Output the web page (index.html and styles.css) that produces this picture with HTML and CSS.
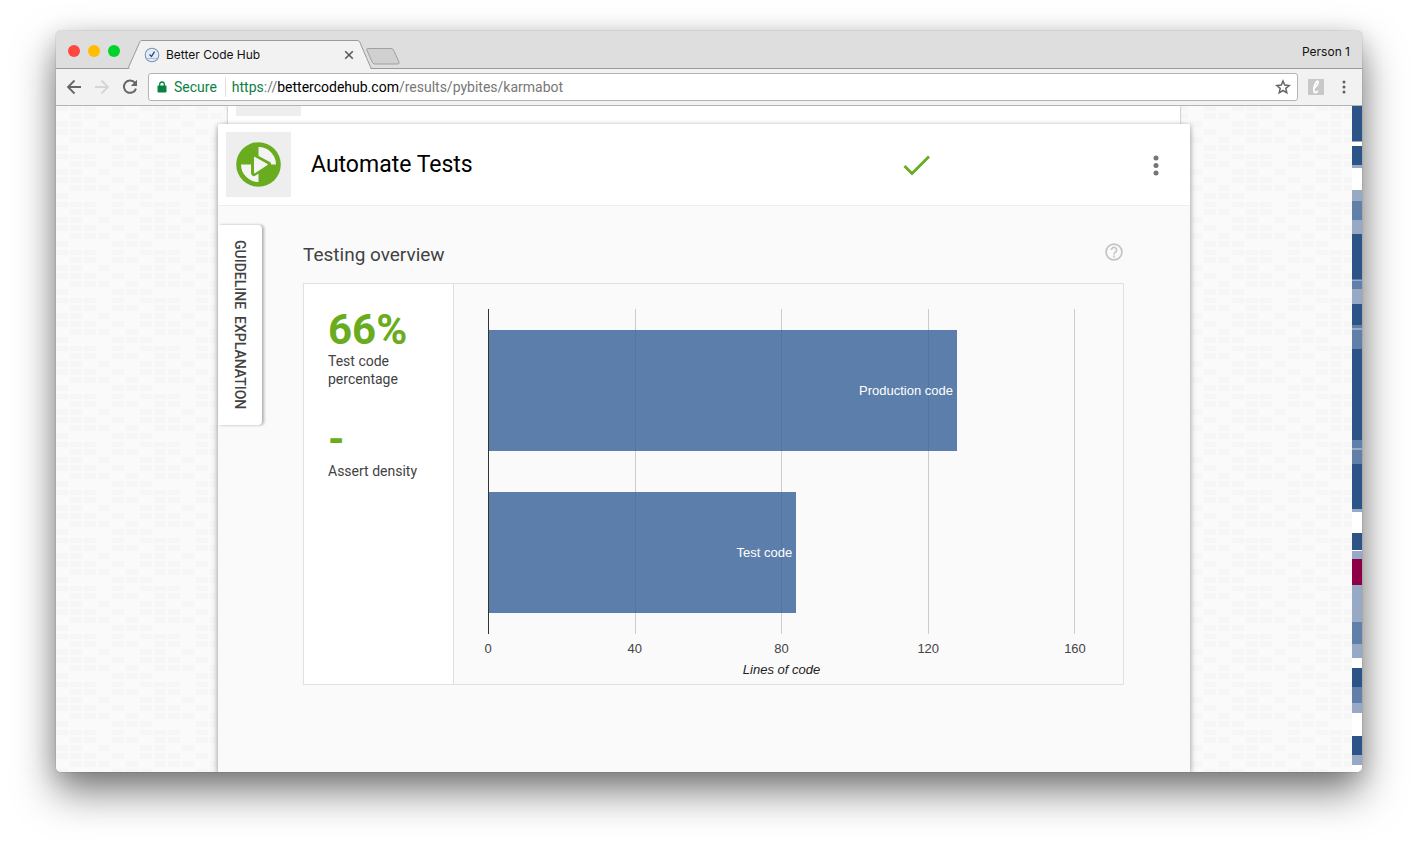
FILE: index.html
```html
<!DOCTYPE html>
<html lang="en">
<head>
<meta charset="utf-8">
<title>Better Code Hub</title>
<link rel="stylesheet" href="styles.css">
</head>
<body>
<div class="window">
  <header class="tabstrip">
    <div class="lights">
      <button class="light red" aria-label="Close window"></button>
      <button class="light yellow" aria-label="Minimize window"></button>
      <button class="light green" aria-label="Zoom window"></button>
    </div>
    <div class="tab">
      <svg class="tab-shape" width="244" height="29" viewBox="0 0 244 29" aria-hidden="true"><path d="M0 28.5 L12 1.5 Q12.500 .5 14 .5 H229 Q231 .5 231.500 1.500 L242.500 27 Q243 28.500 244 28.500" fill="#f2f2f2" stroke="#9a9a9a"/><path d="M2 28.500H242" stroke="#f2f2f2"/></svg>
      <div class="tab-content">
        <svg width="16" height="16" viewBox="0 0 16 16" aria-hidden="true"><circle cx="8" cy="8" r="6.800" fill="#e4ebf5" stroke="#7d95ba" stroke-width="1.100"/><path d="M2.500 11.500h11" stroke="#a9bbd6"/><path d="M5.500 7.500l2 2 3-4.800" fill="none" stroke="#24497e" stroke-width="1.300"/></svg>
        <span class="tab-title">Better Code Hub</span>
        <button class="icon-button" aria-label="Close tab"><svg width="10" height="10" viewBox="0 0 10 10"><path d="M1.200 1.200l7.600 7.600M8.800 1.200l-7.600 7.600" stroke="#5a5a5a" stroke-width="1.600"/></svg></button>
      </div>
    </div>
    <button class="icon-button new-tab" aria-label="New tab"><svg width="34" height="17" viewBox="0 0 34 17"><path d="M1.500 .5H25Q27 .5 27.800 2.500L33 14Q33.500 16 32 16H9Q7 16 6.200 14L.8 2Q.5 .5 1.500 .5Z" fill="#d0d0d0" stroke="#a0a0a0"/></svg></button>
    <span class="person">Person 1</span>
  </header>

  <nav class="toolbar" aria-label="Browser">
    <button class="icon-button" aria-label="Back"><svg width="16" height="16" viewBox="0 0 16 16"><path d="M15 8H2.200M8.500 1.500L2 8l6.500 6.500" fill="none" stroke="#666" stroke-width="1.800"/></svg></button>
    <button class="icon-button" aria-label="Forward"><svg width="16" height="16" viewBox="0 0 16 16"><path d="M1 8h12.800M7.500 1.500L14 8l-6.500 6.500" fill="none" stroke="#d5d5d5" stroke-width="1.800"/></svg></button>
    <button class="icon-button" aria-label="Reload"><svg width="16" height="16" viewBox="0 0 16 16"><path d="M13 3.800A6.200 6.200 0 1 0 14 9.600" fill="none" stroke="#666" stroke-width="2"/><path d="M15 .8V7H8.800Z" fill="#666"/></svg></button>
    <div class="omnibox">
      <svg class="lock" width="10" height="12" viewBox="0 0 10 12" aria-hidden="true"><rect x=".5" y="4.500" width="9" height="7" rx="1" fill="#0b8043"/><path d="M2.700 5V3.300a2.300 2.300 0 0 1 4.600 0V5" fill="none" stroke="#0b8043" stroke-width="1.300"/></svg>
      <span class="secure">Secure</span>
      <a class="url" href="https://bettercodehub.com/results/pybites/karmabot"><span class="scheme">https</span>://<span class="host">bettercodehub.com</span>/results/pybites/karmabot</a>
      <button class="icon-button" aria-label="Bookmark this page"><svg width="16" height="16" viewBox="0 0 16 16"><path d="M8 2l1.700 4.100 4.500.4-3.400 2.900 1 4.400L8 11.500l-3.800 2.300 1-4.400L1.800 6.500l4.500-.4Z" fill="none" stroke="#666" stroke-width="1.500"/></svg></button>
    </div>
    <button class="icon-button extension" aria-label="Extension"><svg width="16" height="16" viewBox="0 0 16 16"><rect width="16" height="16" rx="1" fill="#c8c8c8"/><path d="M5 9.500C8 8.500 11 4.500 10 2.500C9 .8 6.500 5 6 9C5.500 13.500 6.500 15 10 12" fill="none" stroke="#fff" stroke-width="1.700"/></svg></button>
    <button class="icon-button kebab" aria-label="Browser menu"><svg width="4" height="14" viewBox="0 0 4 14" fill="#5f5f5f"><circle cx="2" cy="2" r="1.500"/><circle cx="2" cy="7" r="1.500"/><circle cx="2" cy="12" r="1.500"/></svg></button>
  </nav>

  <div class="page">
    <main class="content">
      <svg class="bricks" width="100%" height="100%" aria-hidden="true">
        <defs><pattern id="brick" width="84" height="48" patternUnits="userSpaceOnUse">
          <path fill="#f6f6f6" d="M0 0h12v5H0zM14 0h12v5H14zM28 0h12v5H28zM56 0h12v5H56zM14 7h12v6H14zM28 7h12v6H28zM56 7h12v6H56zM70 7h12v6H70zM0 15h12v6H0zM14 15h12v6H14zM42 15h12v6H42zM0 23h12v6H0zM14 23h12v6H14zM28 23h12v6H28zM56 23h12v6H56zM14 31h12v6H14zM28 31h12v6H28zM42 31h12v6H42zM70 31h12v6H70zM0 39h12v6H0zM56 39h12v6H56zM70 39h12v6H70z"/>
        </pattern></defs>
        <rect width="100%" height="100%" fill="url(#brick)"/>
      </svg>
      <section class="previous-card"><div class="previous-icon"></div></section>
      <article class="card">
        <header class="card-header">
          <div class="card-icon">
            <svg width="46" height="46" viewBox="0 0 46 46" aria-hidden="true"><circle cx="22.500" cy="22.500" r="22.300" fill="#69ac20"/><path d="M22.500 5A17.500 17.500 0 0 1 40 22.500H22.500Z" fill="#f4f4f4"/><path d="M5 22.500A17.500 17.500 0 0 0 22.500 40V22.500Z" fill="#f4f4f4"/><path d="M18 15L32 22.500L18 31Z" fill="#69ac20" stroke="#69ac20" stroke-width="6" stroke-linejoin="round"/><path d="M18.500 15.200L31.500 22.500L18.500 31Z" fill="#f4f4f4" stroke="#f4f4f4" stroke-linejoin="round"/></svg>
          </div>
          <h1 class="card-title">Automate Tests</h1>
          <svg class="check" width="28" height="22" viewBox="0 0 28 22" role="img" aria-label="Passed"><path d="M1.500 12L9 19.500 26 2.500" fill="none" stroke="#69ac20" stroke-width="2.800"/></svg>
          <button class="icon-button card-menu" aria-label="More"><svg width="6" height="22" viewBox="0 0 6 22" fill="#757575"><circle cx="3" cy="4" r="2.500"/><circle cx="3" cy="11.500" r="2.500"/><circle cx="3" cy="19" r="2.500"/></svg></button>
        </header>
        <div class="card-body">
          <button class="guideline">GUIDELINE&nbsp; EXPLANATION</button>
          <section class="overview">
            <div class="overview-heading">
              <h2 class="overview-title">Testing overview</h2>
              <button class="icon-button" aria-label="Help"><svg width="18" height="18" viewBox="0 0 18 18"><circle cx="9" cy="9" r="7.900" fill="none" stroke="#c4c4c4" stroke-width="1.700"/><path d="M6.400 7a2.600 2.600 0 1 1 4.500 1.800C9.700 9.800 9 10.100 9 11.500M9 12.600v1.800" fill="none" stroke="#c4c4c4" stroke-width="1.600"/></svg></button>
            </div>
            <div class="panel">
              <div class="metrics">
                <div class="metric"><strong class="value">66%</strong><span class="label">Test code percentage</span></div>
                <div class="metric"><strong class="value">-</strong><span class="label">Assert density</span></div>
              </div>
              <figure class="chart">
                <div class="plot">
                  <div class="gridlines"><i></i><i></i><i></i><i></i></div>
                  <div class="bars">
                    <div class="bar" style="width:80%">Production code</div>
                    <div class="bar" style="width:52.5%">Test code</div>
                  </div>
                </div>
                <div class="ticks"><span>0</span><span>40</span><span>80</span><span>120</span><span>160</span></div>
                <figcaption class="axis-title">Lines of code</figcaption>
              </figure>
            </div>
          </section>
        </div>
      </article>
    </main>
    <aside class="minimap" aria-hidden="true"></aside>
  </div>
</div>
<script src="minimap.js"></script>
</body>
</html>
```

FILE: minimap.js
```js
const segments = [
  ['dark', 35], ['pale', 1], ['blank', 4], ['dark', 19], ['pale', 3], ['blank', 22],
  ['pale', 11], ['mid', 19], ['pale', 14], ['dark', 45], ['mid', 1], ['pale', 1],
  ['mid', 8], ['pale', 15], ['dark', 21], ['mid', 3], ['pale', 2], ['mid', 19],
  ['dark', 91], ['mid', 8], ['pale', 2], ['mid', 14], ['dark', 45], ['pale', 3],
  ['blank', 21], ['dark', 17], ['blank', 1], ['pale', 8], ['alert', 26], ['pale', 37],
  ['mid', 22], ['pale', 14], ['blank', 10], ['dark', 19], ['mid', 16], ['pale', 10],
  ['blank', 23], ['dark', 19], ['pale', 10], ['blank', 7]
];
const minimap = document.querySelector('.minimap');
for (const [tone, size] of segments) {
  const segment = document.createElement('span');
  segment.className = tone;
  segment.style.flexGrow = size;
  minimap.append(segment);
}
```

FILE: styles.css
```css
* { box-sizing: border-box; }
body {
  margin: 0;
  min-height: 100vh;
  display: flex;
  padding: 31px 56px 80px;
  background: #fff;
  font-family: Roboto, "Liberation Sans", sans-serif;
  color: #424242;
}
h1, h2, figure { margin: 0; font-weight: 400; }
button { font: inherit; color: inherit; }
.icon-button { display: flex; padding: 0; border: 0; background: none; }

.window {
  flex: 1;
  display: flex;
  flex-direction: column;
  border-radius: 5px;
  overflow: hidden;
  box-shadow: 0 0 1px rgba(0,0,0,.6), 0 20px 40px rgba(0,0,0,.5), 0 4px 22px rgba(0,0,0,.14);
}
.tabstrip {
  display: flex;
  align-items: flex-end;
  height: 38px;
  padding: 0 12px;
  background: #dedede;
  box-shadow: inset 0 -1px #9a9a9a;
}
.lights { display: flex; gap: 8px; margin: 0 8px 12px 0; }
.light { width: 12px; height: 12px; padding: 0; border: 0; border-radius: 50%; }
.red { background: #ff4742; }
.yellow { background: #ffbd00; }
.green { background: #00d42c; }
.tab { display: grid; width: 244px; }
.tab-shape, .tab-content { grid-area: 1 / 1; }
.tab-content { display: flex; align-items: center; padding: 0 18px 0 16px; }
.tab-title { flex: 1; padding-left: 6px; font: 12px Inter, sans-serif; color: #111; }
.new-tab { margin: 0 0 4px -6px; }
.person { margin: 0 0 9px auto; font: 12px/16px Inter, sans-serif; color: #111; }

.toolbar {
  display: flex;
  align-items: center;
  gap: 12px;
  height: 37px;
  padding: 0 16px 0 10px;
  background: #f2f2f2;
  border-bottom: 1px solid #b4b4b4;
}
.omnibox {
  flex: 1;
  display: flex;
  align-items: center;
  height: 28px;
  margin-left: -2px;
  padding: 0 6px 0 8px;
  background: #fff;
  border: 1px solid #b4b4b4;
  border-radius: 3px;
  font-size: 14px;
}
.secure { margin: 0 6px 0 7px; padding-right: 8px; border-right: 1px solid #e0e0e0; line-height: 20px; color: #0b8043; }
.url { flex: 1; color: #777; text-decoration: none; }
.scheme { color: #0b8043; }
.host { color: #000; }
.extension { margin-left: -2px; }
.kebab { margin-left: 6px; }

.page { flex: 1; display: flex; background: #fafafa; }
.content {
  flex: 1;
  position: relative;
  display: flex;
  flex-direction: column;
  align-items: center;
  overflow: hidden;
}
.bricks { position: absolute; inset: 0; }
.previous-card {
  position: relative;
  width: 952px;
  max-width: 74%;
  height: 18px;
  padding-left: 8px;
  background: #fff;
  box-shadow: 0 0 2px rgba(0,0,0,.4);
}
.previous-icon { width: 65px; height: 10px; background: #eee; }
.card {
  position: relative;
  flex: 1;
  width: 75%;
  background: #fafafa;
  border-radius: 2px 2px 0 0;
  box-shadow: 0 1px 5px rgba(0,0,0,.35), 0 4px 10px rgba(0,0,0,.12);
}
.card-header {
  display: flex;
  align-items: center;
  padding: 8px 31px 8px 8px;
  background: #fff;
  border-bottom: 1px solid #eee;
  border-radius: 2px 2px 0 0;
}
.card-icon { display: grid; place-items: center; width: 65px; height: 65px; background: #eee; }
.card-title { flex: 1; padding-left: 20px; font-size: 23px; line-height: 32px; color: #000; }
.check { margin-right: 222px; }
.card-body { display: flex; align-items: flex-start; padding: 19px 66px 86px 0; }
.guideline {
  width: 44px;
  height: 200px;
  padding: 0;
  border: 0;
  border-radius: 0 4px 4px 0;
  background: #fff;
  box-shadow: 2px 0 3px rgba(0,0,0,.3);
  writing-mode: vertical-rl;
  font-weight: 500;
  font-size: 14px;
}
.overview { flex: 1; padding: 14px 0 0 41px; }
.overview-heading { display: flex; align-items: center; justify-content: space-between; height: 26px; margin-bottom: 18px; padding-right: 1px; }
.overview-title { font-size: 19px; padding-top: 4px; }
.panel { display: flex; height: 402px; border: 1px solid #e0e0e0; }
.metrics { width: 150px; padding: 24px; background: #fff; border-right: 1px solid #e0e0e0; }
.metric { display: flex; flex-direction: column; margin-bottom: 30px; }
.value { font-size: 42px; line-height: 44px; color: #69ac20; }
.label { font-size: 14px; line-height: 18px; white-space: nowrap; }
.metric:first-child .label { white-space: normal; }
.chart { flex: 1; padding: 25px 48px 0 34px; font: 13px/16px "Liberation Sans", sans-serif; }
.plot { display: grid; height: 325px; border-left: 1px solid #333; }
.gridlines, .bars { grid-area: 1 / 1; }
.gridlines { display: flex; }
.gridlines i { flex: 1; border-right: 1px solid #ccc; }
.bars { display: flex; flex-direction: column; justify-content: space-between; padding: 21px 1px 21px 0; }
.bar {
  display: flex;
  align-items: center;
  justify-content: flex-end;
  height: 121px;
  padding-right: 4px;
  background: rgba(53,95,150,.8);
  color: #fff;
}
.ticks { display: flex; justify-content: space-between; margin: 7px -20px 5px; }
.ticks span { width: 40px; text-align: center; color: #444; }
.axis-title { text-align: center; font-style: italic; color: #222; }
.minimap { width: 10px; display: flex; flex-direction: column; background: #fff; }
.minimap span { flex-basis: 0; }
.dark { background: #2d5487; }
.mid { background: #607fa9; }
.pale { background: #97a9c5; }
.alert { background: #8e0045; }
```
